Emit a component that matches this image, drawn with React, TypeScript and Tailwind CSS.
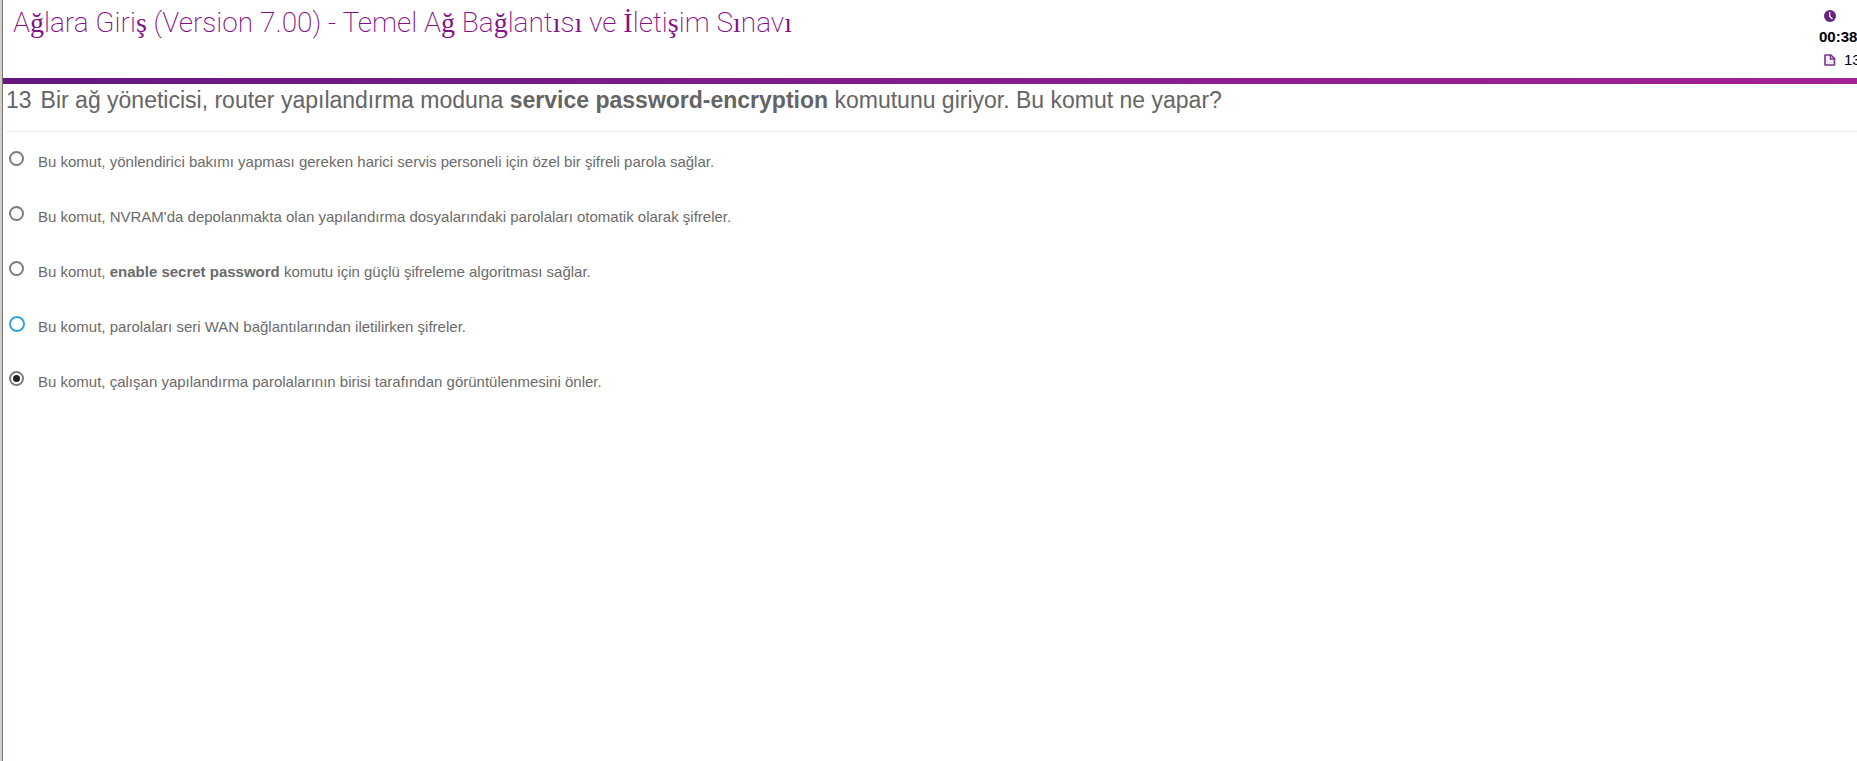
import React from "react";

const FALLBACK_GLYPHS = /([ğşıİ]+)/;

function Title({ text }: { text: string }) {
  return (
    <h1 className="font-['Roboto',sans-serif] text-[28px] leading-[36px] font-extralight text-[#85108a]">
      {text.split(FALLBACK_GLYPHS).map((part, i) =>
        FALLBACK_GLYPHS.test(part) ? (
          <span key={i} className="font-['Liberation_Serif',serif]">{part}</span>
        ) : (
          part
        ),
      )}
    </h1>
  );
}

const options: { id: string; label: React.ReactNode; active?: boolean }[] = [
  { id: "a", label: "Bu komut, yönlendirici bakımı yapması gereken harici servis personeli için özel bir şifreli parola sağlar." },
  { id: "b", label: "Bu komut, NVRAM'da depolanmakta olan yapılandırma dosyalarındaki parolaları otomatik olarak şifreler." },
  { id: "c", label: <>Bu komut, <b>enable secret password</b> komutu için güçlü şifreleme algoritması sağlar.</> },
  { id: "d", label: "Bu komut, parolaları seri WAN bağlantılarından iletilirken şifreler.", active: true },
  { id: "e", label: "Bu komut, çalışan yapılandırma parolalarının birisi tarafından görüntülenmesini önler." },
];

const radioBase =
  "appearance-none rounded-full border-2 bg-white shrink-0 grid place-items-center before:size-[7px] before:rounded-full before:bg-[#222] before:content-none checked:before:content-['']";

export default function App() {
  const [selected, setSelected] = React.useState("e");
  return (
    <div className="flex min-h-screen overflow-hidden bg-white font-['Liberation_Sans',Arial,sans-serif]">
      <div className="w-[3px] shrink-0 border-r border-[#777572] bg-[#d2cec6]" />
      <div className="min-w-0 flex-1">
        <header className="flex h-[78px] justify-between overflow-hidden">
          <div className="pt-[5px] pl-[10px]">
            <Title text="Ağlara Giriş (Version 7.00) - Temel Ağ Bağlantısı ve İletişim Sınavı" />
          </div>
          <div className="w-[38px] shrink-0 overflow-hidden pt-[10px] whitespace-nowrap text-black">
            <svg className="ml-[5px] block size-[12px]" viewBox="0 0 12 12" aria-hidden="true">
              <circle cx="6" cy="6" r="6" fill="#65267f" />
              <path d="M5.7 2v4.4L8.5 9" fill="none" stroke="#fff" strokeWidth="1.2" />
            </svg>
            <div className="mt-[6px] text-[15px] leading-[18px] font-bold">00:38</div>
            <div className="mt-[5px] flex items-center gap-[8px] pl-[5px] text-[15px] leading-[18px]">
              <svg className="size-[12px] shrink-0" viewBox="0 0 12 12" aria-hidden="true">
                <path d="M1 1h6L10.5 4.5V11H1z" fill="#f3ebf5" stroke="#74398c" strokeWidth="1.6" strokeLinejoin="round" />
                <path d="M6.5 1v4h4" fill="none" stroke="#74398c" strokeWidth="1.4" />
              </svg>
              <span>13</span>
            </div>
          </div>
        </header>
        <div className="h-[6px] bg-linear-to-r from-[#64177f] to-[#a32096]" />
        <main className="pl-[3px]">
          <h2 className="flex gap-[9px] border-b border-[#ebebeb] pt-[3px] pb-[17px] text-[23px] leading-[27px] text-[#656565]">
            <span>13</span>
            <span>
              Bir ağ yöneticisi, router yapılandırma moduna <b>service password-encryption</b> komutunu giriyor. Bu komut ne yapar?
            </span>
          </h2>
          <div role="radiogroup" className="flex flex-col gap-[35px] pt-[19px] pl-[3px]">
            {options.map((o) => (
              <label key={o.id} className="flex h-5 items-start text-[15px] leading-5 text-[#6b6b6b]">
                <span className="flex w-[29px] shrink-0">
                  <input
                    type="radio"
                    name="answer"
                    checked={selected === o.id}
                    onChange={() => setSelected(o.id)}
                    className={`${radioBase} ${o.active ? "size-[16px] border-[#3aa5dc]" : "size-[15px] border-[#7c7c7c]"}`}
                  />
                </span>
                <span className="pt-px">{o.label}</span>
              </label>
            ))}
          </div>
        </main>
      </div>
    </div>
  );
}
